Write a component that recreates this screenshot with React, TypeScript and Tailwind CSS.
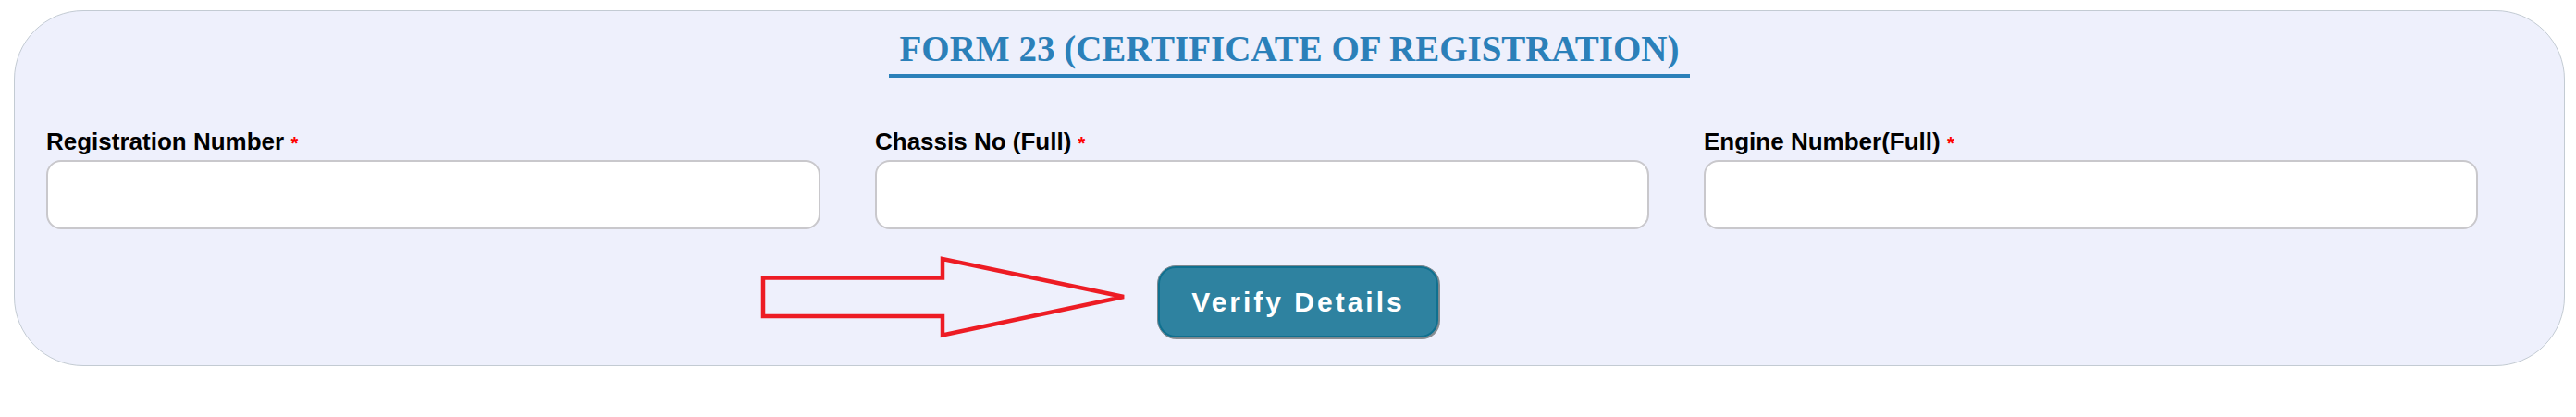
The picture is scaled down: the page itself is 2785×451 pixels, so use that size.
import React from "react";

const fields = [
  { label: "Registration Number" },
  { label: "Chassis No (Full)" },
  { label: "Engine Number(Full)" },
];

const RedArrow = () => (
  <svg
    width="397"
    height="90"
    viewBox="0 0 397 90"
    className="absolute right-full top-[-11px] mr-[34px]"
  >
    <polygon
      points="5,24.5 199,24.5 199,4 395,45 199,86.5 199,66 5,66"
      fill="none"
      stroke="#ed1c24"
      strokeWidth="4.5"
      strokeLinejoin="miter"
    />
  </svg>
);

export default function App() {
  return (
    <div className="bg-white min-h-[451px] pt-[11px] pl-[15px] pr-[12px]">
      <div className="border border-[#c3cbd3] bg-[#eef0fc] rounded-[75px] pt-[19px] pb-[29px]">
        <div className="flex justify-center">
          <h2 className="font-['Liberation_Serif',serif] font-bold text-[39px] leading-[43px] text-[#2b80b9] px-[12px] pb-[6px] border-b-4 border-[#2b80b9]">
            FORM 23 (CERTIFICATE OF REGISTRATION)
          </h2>
        </div>

        <div className="mt-[54px] pl-[34px] grid grid-cols-[repeat(3,837px)] gap-x-[59px]">
          {fields.map((f) => (
            <div key={f.label} className="flex flex-col">
              <label className="font-['Liberation_Sans',Arial,sans-serif] font-bold text-[26px] leading-[30px] text-black mb-[5px]">
                {f.label}{" "}
                <span className="text-[20px] leading-none text-[#ff0000]">*</span>
              </label>
              <input
                type="text"
                className="h-[75px] w-full bg-white border-2 border-[#c9c8cc] rounded-[16px] outline-none"
              />
            </div>
          ))}
        </div>

        <div className="mt-[39px] flex justify-center">
          <div className="relative ml-[19px]">
            <RedArrow />
            <button className="h-[79px] flex items-center px-[36px] rounded-[20px] bg-[#2e82a0] border border-[#7d8890] shadow-[inset_0_0_0_2px_#10708f,1px_1px_0_#8a8f93] font-['Liberation_Sans',Arial,sans-serif] font-bold text-[30px] tracking-[3px] text-white">
              Verify Details
            </button>
          </div>
        </div>
      </div>
    </div>
  );
}
